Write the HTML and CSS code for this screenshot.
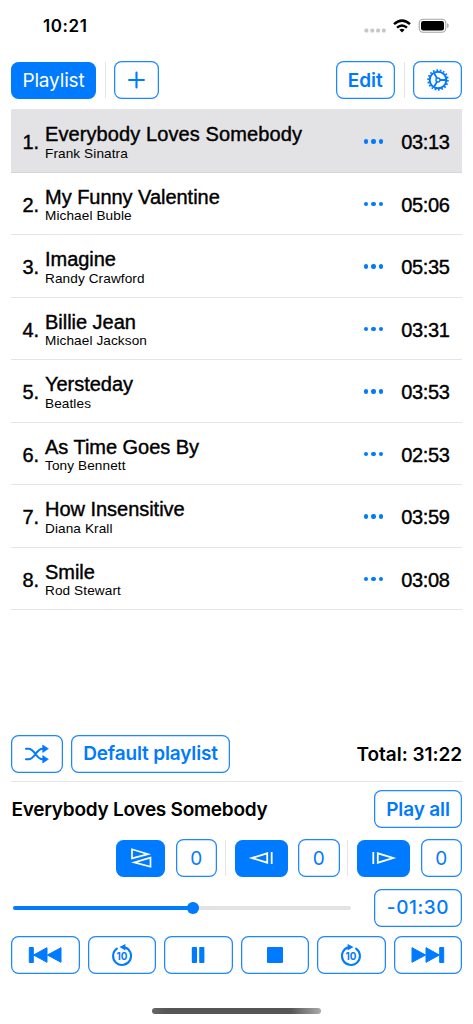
FILE: index.html
```html
<!DOCTYPE html>
<html lang="en">
<head>
<meta charset="utf-8">
<title>Playlist</title>
<link rel="stylesheet" href="styles.css">
</head>
<body>
<div class="app">
  <header class="status">
    <span class="clock">10:21</span>
    <svg class="indicators" width="86" height="18" viewBox="0 0 86 18">
      <g fill="#c8c8ca"><rect x="0.4" y="10.6" width="4" height="4" rx="1.5"/><rect x="6.3" y="10.6" width="4" height="4" rx="1.5"/><rect x="12.1" y="10.6" width="4" height="4" rx="1.5"/><rect x="17.8" y="10.6" width="4" height="4" rx="1.5"/></g>
      <g fill="none" stroke="#000" stroke-width="2.5"><path d="M30 6.1Q38 -0.9 46 6.1"/><path d="M33 9.6Q38 5.3 43 9.6"/></g>
      <path d="M35.4 11.7Q38 9.7 40.6 11.7L38 14.4Z"/>
      <rect x="55.2" y="1.2" width="26.6" height="13" rx="4" fill="none" stroke="#a5a5a8" stroke-width="1.1"/>
      <rect x="57" y="3" width="23" height="9.4" rx="2.2"/>
      <path d="M83.2 5.3Q84.7 5.8 84.7 7.7T83.2 10.1Z" fill="#a5a5a8"/>
    </svg>
  </header>

  <nav class="toolbar">
    <button class="btn filled playlist">Playlist</button>
    <i class="divider"></i>
    <button class="btn add"><svg width="18" height="18" viewBox="0 0 18 18"><path d="M8.5 1.6V16.4M1.1 9H15.9" fill="none" stroke="currentColor" stroke-width="2.1" stroke-linecap="round"/></svg></button>
    <span class="spacer"></span>
    <button class="btn edit">Edit</button>
    <i class="divider"></i>
    <button class="btn settings"><svg width="24" height="24" viewBox="-12 -12 24 24" fill="none" stroke="currentColor"><circle r="8.3" stroke-width="2"/><circle r="9.9" stroke-width="1.7" pathLength="36" stroke-dasharray="1 1"/><circle r="2" stroke-width="1.4"/><path d="M2 0H8M-1 -1.8L-4.1 -7.1M-1 1.8L-4.1 7.1" stroke-width="1.8"/></svg></button>
  </nav>

  <main class="songs">
    <div class="song active"><span class="num">1.</span><div class="info"><b class="title">Everybody Loves Somebody</b><span class="artist">Frank Sinatra</span></div><span class="dots"><i></i><i></i><i></i></span><span class="time">03:13</span></div>
    <div class="song"><span class="num">2.</span><div class="info"><b class="title">My Funny Valentine</b><span class="artist">Michael Buble</span></div><span class="dots"><i></i><i></i><i></i></span><span class="time">05:06</span></div>
    <div class="song"><span class="num">3.</span><div class="info"><b class="title">Imagine</b><span class="artist">Randy Crawford</span></div><span class="dots"><i></i><i></i><i></i></span><span class="time">05:35</span></div>
    <div class="song"><span class="num">4.</span><div class="info"><b class="title">Billie Jean</b><span class="artist">Michael Jackson</span></div><span class="dots"><i></i><i></i><i></i></span><span class="time">03:31</span></div>
    <div class="song"><span class="num">5.</span><div class="info"><b class="title">Yersteday</b><span class="artist">Beatles</span></div><span class="dots"><i></i><i></i><i></i></span><span class="time">03:53</span></div>
    <div class="song"><span class="num">6.</span><div class="info"><b class="title">As Time Goes By</b><span class="artist">Tony Bennett</span></div><span class="dots"><i></i><i></i><i></i></span><span class="time">02:53</span></div>
    <div class="song"><span class="num">7.</span><div class="info"><b class="title">How Insensitive</b><span class="artist">Diana Krall</span></div><span class="dots"><i></i><i></i><i></i></span><span class="time">03:59</span></div>
    <div class="song"><span class="num">8.</span><div class="info"><b class="title">Smile</b><span class="artist">Rod Stewart</span></div><span class="dots"><i></i><i></i><i></i></span><span class="time">03:08</span></div>
  </main>

  <footer class="player">
    <div class="summary">
      <button class="btn shuffle"><svg width="26" height="20" viewBox="0 0 26 20"><path d="M2 4.7H4.5C11 4.7 12 15.3 18.5 15.3H20M2 15.3H4.5C11 15.3 12 4.7 18.5 4.7H20" fill="none" stroke="currentColor" stroke-width="2.1" stroke-linecap="round"/><path d="M18.7 1V8.5L24.4 4.7ZM18.7 11.5V19L24.4 15.3Z" fill="currentColor" stroke="currentColor" stroke-width=".6" stroke-linejoin="round"/></svg></button>
      <button class="btn default">Default playlist</button>
      <span class="total">Total: 31:22</span>
    </div>
    <div class="current">
      <span class="now">Everybody Loves Somebody</span>
      <button class="btn play-all">Play all</button>
    </div>
    <div class="adjust">
      <button class="btn filled pitch"><svg width="22" height="22" viewBox="0 0 22 22" fill="none" stroke="currentColor" stroke-width="1.7"><path d="M2 2.3V11.3L18 7.1Z"/><path d="M20.5 10.7V19.7L4.3 15.4Z"/></svg></button>
      <button class="btn value">0</button>
      <i class="divider"></i>
      <button class="btn filled step"><svg width="26" height="16" viewBox="0 0 26 16" fill="none" stroke="currentColor" stroke-width="1.8"><path d="M19.2 3.3V12.7L3.8 8Z"/><path d="M23.7 2V14"/></svg></button>
      <button class="btn value">0</button>
      <i class="divider"></i>
      <button class="btn filled step"><svg width="26" height="16" viewBox="0 0 26 16" fill="none" stroke="currentColor" stroke-width="1.8"><path d="M6.8 3.3V12.7L22.2 8Z"/><path d="M2.3 2V14"/></svg></button>
      <button class="btn value">0</button>
    </div>
    <div class="progress">
      <div class="track"><div class="elapsed"></div><div class="thumb"></div></div>
      <button class="btn remain">-01:30</button>
    </div>
    <div class="transport">
      <button class="btn"><svg width="36" height="20" viewBox="0 0 36 20" fill="currentColor" stroke="currentColor" stroke-linejoin="round"><rect x="2.3" y="2.5" width="4" height="15"/><path d="M20 2.7V17.3L6.6 10Z"/><path d="M34 2.7V17.3L20.4 10Z"/></svg></button>
      <button class="btn"><svg width="24" height="24" viewBox="0 0 24 24"><path d="M6.9 5.6A9 9 0 1 0 14.5 4.3" fill="none" stroke="currentColor" stroke-width="2" stroke-linecap="round"/><path d="M15.4 .9V7.6L9.5 4.1Z" fill="currentColor"/><text class="skip" x="12" y="16.7">10</text></svg></button>
      <button class="btn"><svg width="16" height="20" viewBox="0 0 16 20" fill="currentColor"><rect x="1.8" y="2" width="5.2" height="16" rx=".8"/><rect x="9.2" y="2" width="5.2" height="16" rx=".8"/></svg></button>
      <button class="btn"><svg width="18" height="20" viewBox="0 0 18 20" fill="currentColor"><rect x="1" y="2" width="16" height="16" rx="1"/></svg></button>
      <button class="btn"><svg width="24" height="24" viewBox="0 0 24 24"><path d="M17.1 5.6A9 9 0 1 1 9.5 4.3" fill="none" stroke="currentColor" stroke-width="2" stroke-linecap="round"/><path d="M8.6 .9V7.6L14.5 4.1Z" fill="currentColor"/><text class="skip" x="12" y="16.7">10</text></svg></button>
      <button class="btn"><svg width="36" height="20" viewBox="0 0 36 20" fill="currentColor" stroke="currentColor" stroke-linejoin="round"><rect x="29.7" y="2.5" width="4" height="15"/><path d="M16 2.7V17.3L29.4 10Z"/><path d="M2 2.7V17.3L15.6 10Z"/></svg></button>
    </div>
  </footer>
  <div class="home"></div>
</div>
</body>
</html>
```
FILE: styles.css
```css
* { box-sizing: border-box; }
body { margin: 0; background: #fff; color: #000; font-family: Inter, sans-serif; }
.app { width: 473px; height: 1024px; padding: 0 11px; display: flex; flex-direction: column; overflow: hidden; }
.status { height: 61px; flex: none; display: flex; justify-content: space-between; padding: 16px 12px 0 32px; }
.clock { font-size: 17px; line-height: 20px; font-weight: 600; letter-spacing: .6px; }
.indicators { margin-top: 2px; }
.btn { height: 38px; padding: 0; border: 0; border-radius: 7.5px; background: #fff; box-shadow: inset 0 0 0 1.25px #1c87ff; color: #007aff; font: 600 19px/40px Inter, sans-serif; letter-spacing: -.15px; display: flex; align-items: center; justify-content: center; flex: none; white-space: nowrap; }
.btn svg { display: block; flex: none; }
.filled { background: #007aff; color: #fff; box-shadow: none; }
.divider { width: 1px; height: 36px; background: #e5e5e7; flex: none; }
.toolbar { height: 38px; flex: none; display: flex; align-items: center; gap: 8.5px; }
.playlist { width: 85px; height: 37px; font-weight: 400; letter-spacing: -.15px; padding-top: 1px; }
.add { width: 45px; }
.spacer { flex: 1; }
.edit { width: 59.5px; letter-spacing: 0; padding-top: 2px; }
.settings { width: 49px; }

.songs { height: 501px; flex: none; margin-top: 10px; border-top: 1px solid #e5e5e7; display: grid; grid-template-rows: repeat(8, 62.5px); font-family: "Liberation Sans", Arial, sans-serif; }
.song { display: flex; border-bottom: 1px solid #e5e5e7; padding: 0 12.5px 0 11.5px; }
.active { background: #e3e3e5; border-color: #d5d5d7; }
.num { width: 22.5px; padding-top: 20px; font-size: 20px; line-height: 24px; -webkit-text-stroke: .4px #000; }
.info { flex: 1; padding-top: 12px; display: flex; flex-direction: column; }
.title { font-size: 20px; line-height: 24px; font-weight: 400; letter-spacing: -.03px; -webkit-text-stroke: .4px #000; }
.active .title { letter-spacing: .1px; }
.artist { margin-top: -.1px; font-size: 13.6px; line-height: 15px; letter-spacing: .1px; }
.dots { display: flex; gap: 3px; padding-top: 29.2px; margin-right: 18px; }
.dots i { width: 4.4px; height: 4.4px; border-radius: 50%; background: #007aff; }
.time { padding-top: 20px; font-size: 20px; line-height: 24px; letter-spacing: -.35px; -webkit-text-stroke: .4px #000; }

.player { margin-top: 125px; flex: none; }
.summary { height: 47px; display: flex; gap: 8px; border-bottom: 1px solid #e5e5e7; }
.shuffle { width: 52px; }
.default { width: 159px; }
.total { margin-left: auto; font-size: 19px; line-height: 40px; font-weight: 600; letter-spacing: -.05px; }
.current { height: 38px; margin-top: 8px; display: flex; justify-content: space-between; }
.now { font-size: 19px; line-height: 40px; font-weight: 600; letter-spacing: -.26px; margin-left: .5px; }
.play-all { width: 88px; padding-top: 2px; }
.adjust { margin-top: 11px; height: 38px; display: flex; align-items: center; justify-content: flex-end; }
.adjust .filled { height: 37px; }
.pitch { width: 49px; }
.step { width: 53px; }
.value { width: 41.5px; margin-left: 10.5px; font-weight: 400; padding-top: 1px; }
.adjust .divider { margin: 0 9px 0 7.5px; }
.progress { height: 38px; margin-top: 12px; display: flex; align-items: center; }
.track { position: relative; width: 338px; height: 4.5px; margin-left: 1.5px; background: #e3e3e5; border-radius: 3px; }
.elapsed { width: 180px; height: 100%; border-radius: 3px; background: #007aff; }
.thumb { position: absolute; left: 174.5px; top: -3.5px; width: 11.5px; height: 11.5px; border-radius: 50%; background: #007aff; }
.remain { width: 88px; margin-left: auto; font-weight: 500; letter-spacing: .6px; line-height: 38px; }
.transport { margin-top: 9px; display: grid; grid-template-columns: repeat(6, 1fr); gap: 8px; }
.skip { font: 700 9.8px Inter, sans-serif; fill: currentColor; text-anchor: middle; letter-spacing: 0; }
.home { width: 169px; height: 6px; margin: 34px 0 0 141px; border-radius: 3px; flex: none; background: linear-gradient(90deg, #666, #565656 8%, #565656 82%, #aaa); }
```
